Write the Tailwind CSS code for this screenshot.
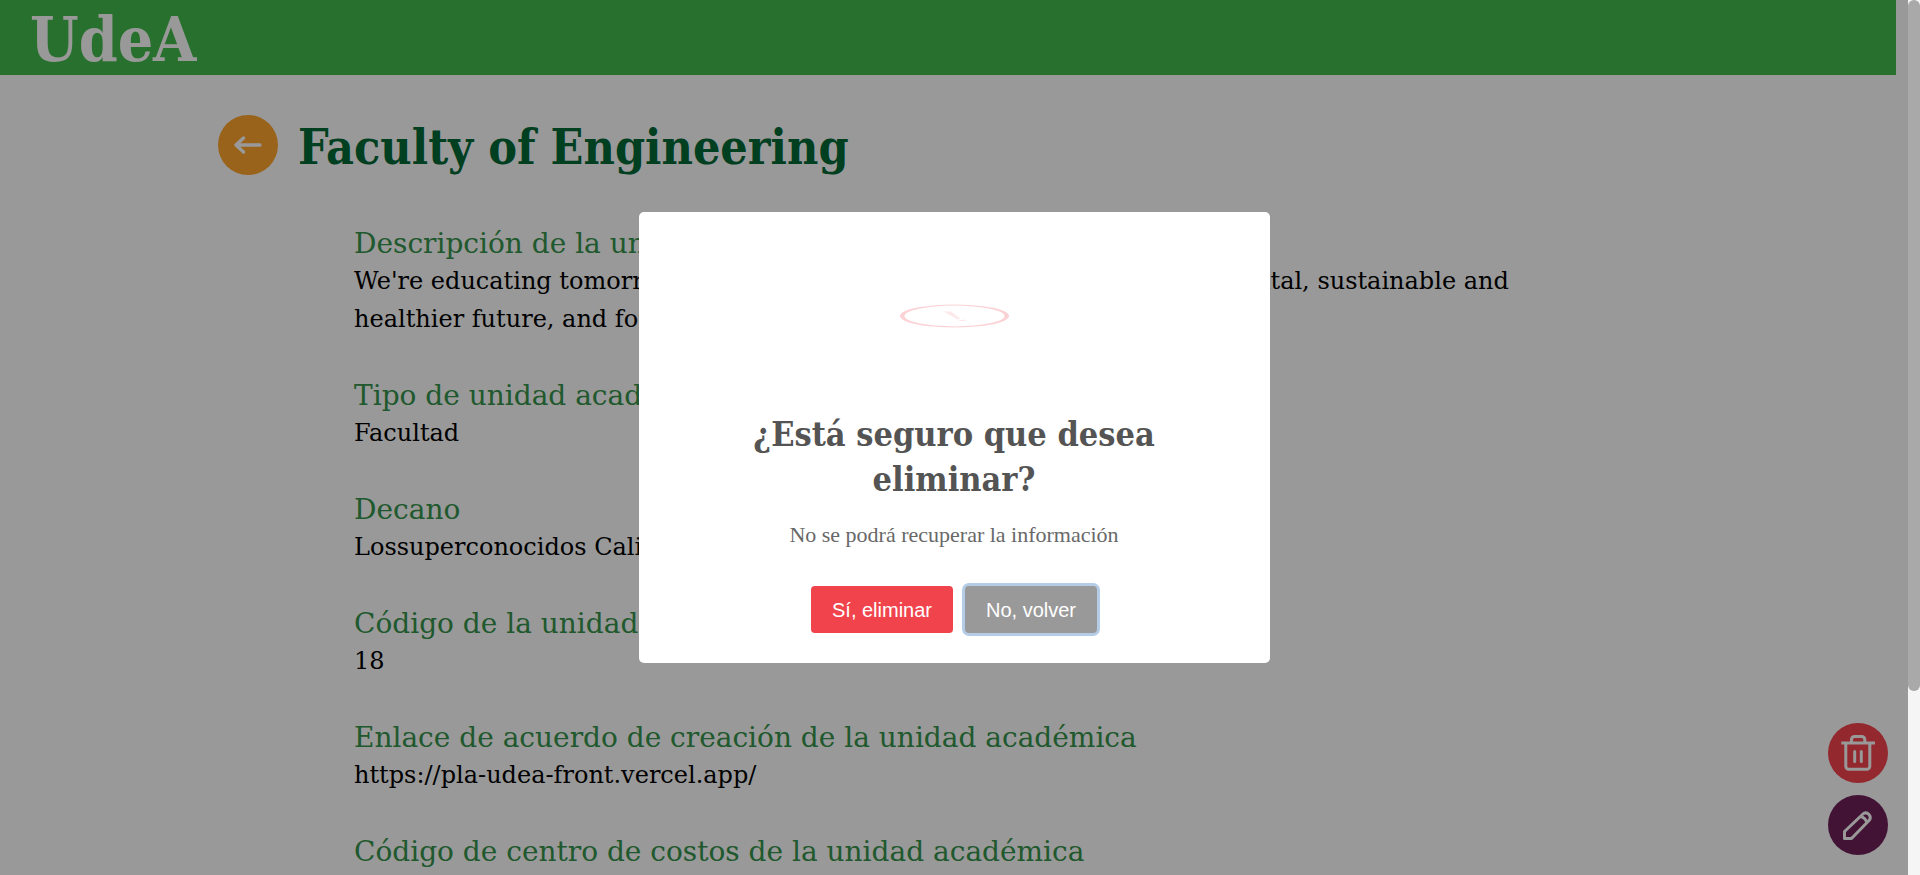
<!DOCTYPE html>
<html lang="es">
<head>
<meta charset="utf-8">
<title>UdeA - Faculty of Engineering</title>
<script src="https://cdn.jsdelivr.net/npm/@tailwindcss/browser@4"></script>
</head>
<body class="h-screen overflow-hidden bg-white text-black font-['Roboto_Slab','DejaVu_Serif',serif]">
<div class="flex h-full">
  <div class="relative h-full min-w-0 flex-1 overflow-hidden">
    <header class="mr-3 flex h-[75px] items-center bg-[#44bb4b] px-[30px] pt-1">
      <a href="#" class="font-['Roboto_Slab','DejaVu_Serif_Condensed',serif] text-[62px] leading-[71px] font-black text-white">UdeA</a>
    </header>
    <main class="px-[218px] pt-10">
      <div class="flex items-center gap-5">
        <button type="button" aria-label="Volver" class="size-[60px] shrink-0 rounded-full bg-[#ffa52d]">
          <svg viewBox="0 0 60 60" class="size-full" fill="none" stroke="#fff" stroke-width="3.4" stroke-linecap="round" stroke-linejoin="round"><path d="M42 30H18M25.500 23L18 30l7.500 7"/></svg>
        </button>
        <h1 class="pt-1 font-['Roboto_Slab','DejaVu_Serif_Condensed',serif] text-[48px] leading-[56px] font-bold whitespace-nowrap text-[#026937]">Faculty of Engineering</h1>
      </div>
      <dl class="flex flex-col gap-10 px-[136px] pt-[51px] text-[24px] leading-[38px]">
        <div><dt class="text-[28px] leading-9 text-[#35944b]">Descripción de la unidad académica</dt><dd>We're educating tomorrow's engineers, and driving research for a new digital, sustainable and healthier future, and foreseeing change.</dd></div>
        <div><dt class="text-[28px] leading-9 text-[#35944b]">Tipo de unidad académica</dt><dd>Facultad</dd></div>
        <div><dt class="text-[28px] leading-9 text-[#35944b]">Decano</dt><dd>Lossuperconocidos Calidosos</dd></div>
        <div><dt class="text-[28px] leading-9 text-[#35944b]">Código de la unidad académica</dt><dd>18</dd></div>
        <div><dt class="text-[28px] leading-9 text-[#35944b]">Enlace de acuerdo de creación de la unidad académica</dt><dd><a href="https://pla-udea-front.vercel.app/">https://pla-udea-front.vercel.app/</a></dd></div>
        <div><dt class="text-[28px] leading-9 text-[#35944b]">Código de centro de costos de la unidad académica</dt></div>
      </dl>
    </main>
    <div class="absolute right-5 bottom-5 flex flex-col gap-3">
      <button type="button" aria-label="Eliminar" class="size-[60px] rounded-full bg-[#f5444d]">
        <svg viewBox="0 0 60 60" class="size-full" fill="none" stroke="#fff" stroke-width="3"><path d="M13.300 20H47M17.800 20V43.200a3 3 0 0 0 3 3H38.800a3 3 0 0 0 3-3V20M23.500 20V16.500a3 3 0 0 1 3-3H33.800a3 3 0 0 1 3 3V20"/><path d="M26.700 28.500V38.500M33.300 28.500V38.500" stroke-linecap="round"/></svg>
      </button>
      <button type="button" aria-label="Editar" class="size-[60px] rounded-full bg-[#70205b]">
        <svg viewBox="0 0 60 60" class="size-full" fill="none" stroke="#fff" stroke-width="3" stroke-linejoin="round"><path d="M16.500 43.500V36.500L35.500 18.500a4.600 4.600 0 0 1 6 6.500L23.500 43.500ZM32.500 21.500q5 1 6.500 6.500"/></svg>
      </button>
    </div>
    <div class="absolute inset-0 flex items-center justify-center bg-black/40">
      <div role="dialog" aria-modal="true" aria-labelledby="t" class="flex w-[631px] flex-col items-center rounded-[5px] bg-white pt-[92px] pb-[30px] text-center">
        <svg viewBox="0 0 109 24" class="h-6 w-[109px]" fill="#fbd3d6"><path fill-rule="evenodd" d="M0 12a54.500 11.500 0 0 1 109 0a54.500 11.500 0 0 1-109 0ZM4.500 12a50 10.400 0 0 0 100 0a50 10.400 0 0 0-100 0Z"/><path fill="#fde8ea" d="M43.500 7.500L51 7.500L60 14.500L58 15.500ZM58 16.500L64 15.500L66.500 17L60 17Z"/></svg>
        <h2 id="t" class="mt-[84px] w-[460px] font-['Roboto_Slab','DejaVu_Serif_Condensed',serif] text-[34px] leading-[45px] font-semibold text-[#545454]">¿Está seguro que desea eliminar?</h2>
        <p class="mt-5 font-['Liberation_Serif',serif] text-[22px] leading-[26px] text-[#686868]">No se podrá recuperar la información</p>
        <div class="mt-[38px] flex gap-3 font-['Liberation_Sans',sans-serif] text-[20px] text-white">
          <button type="button" class="h-[47px] w-[142px] rounded-[4px] bg-[#f0434c]">Sí, eliminar</button>
          <button type="button" class="h-[47px] w-[132px] rounded-[4px] bg-[#999] ring-[3px] ring-[#b4cce6]">No, volver</button>
        </div>
      </div>
    </div>
  </div>
  <div class="h-full w-3 shrink-0 bg-[#f5f5f5]"><div class="h-[79%] rounded-full bg-[#a9a9a9]"></div></div>
</div>
</body>
</html>
